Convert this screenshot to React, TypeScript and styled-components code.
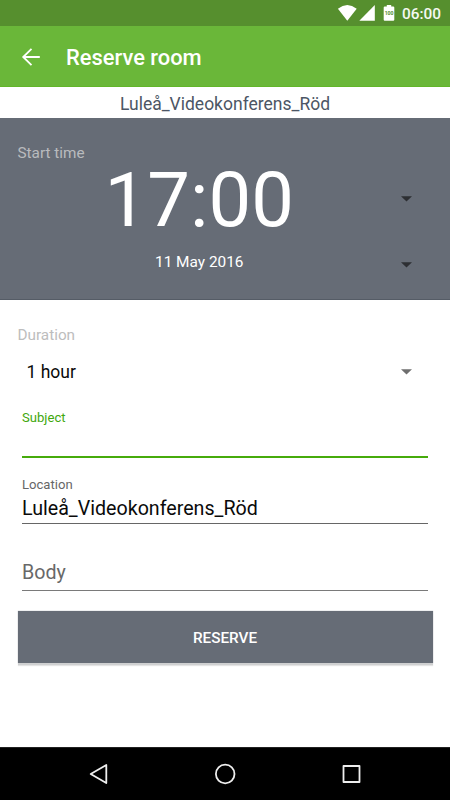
import React from "react";
import styled, { createGlobalStyle } from "styled-components";

const GlobalStyle = createGlobalStyle`
  * { box-sizing: border-box; }
  body { margin: 0; background: #fff; font-family: Roboto, sans-serif; }
`;

const Screen = styled.main`
  width: 450px;
  height: 800px;
  display: flex;
  flex-direction: column;
  background: #fff;
  overflow: hidden;
`;

const StatusBar = styled.div`
  height: 26px;
  flex: none;
  display: flex;
  align-items: flex-start;
  justify-content: flex-end;
  padding-right: 9px;
  background: #568f2e;
`;

const StatusIcons = styled.svg`
  display: block;
  width: 60px;
  height: 26px;
  margin-right: 5px;
`;

const Clock = styled.span`
  font-size: 15.4px;
  font-weight: 500;
  line-height: 28px;
  color: #f5f9f2;
`;

const Toolbar = styled.header`
  height: 61px;
  flex: none;
  display: flex;
  align-items: center;
  padding: 1px 0 0 21px;
  background: #6ab739;
  border-bottom: 1px solid #62b62a;
`;

const BackButton = styled.button`
  display: block;
  width: 20px;
  height: 20px;
  margin-right: 25px;
  padding: 0;
  border: 0;
  background: none;
  svg { display: block; }
`;

const Title = styled.h1`
  margin: 2px 0 0;
  font-size: 21.9px;
  line-height: 26px;
  font-weight: 500;
  color: #fff;
`;

const RoomName = styled.div`
  height: 31px;
  flex: none;
  padding-top: 6px;
  text-align: center;
  font-size: 17.5px;
  line-height: 22px;
  color: #4c5665;
`;

const StartPanel = styled.section`
  height: 182px;
  flex: none;
  padding: 25px 36px 0 17.5px;
  background: #666c76;
  border-bottom: 1px solid #555c66;
`;

const SectionLabel = styled.div<{ $color: string }>`
  height: 20px;
  font-size: 15.3px;
  line-height: 20px;
  color: ${(p) => p.$color};
`;

const PickerRow = styled.div<{ $height: number }>`
  height: ${(p) => p.$height}px;
  display: flex;
  align-items: center;
  justify-content: space-between;
`;

const PickerValue = styled.div<{ $size: number; $shift: number }>`
  flex: 1;
  text-align: center;
  padding-right: 18px;
  font-size: ${(p) => p.$size}px;
  line-height: 1;
  color: #fff;
  margin-top: ${(p) => p.$shift}px;
`;

const Arrow = styled.svg`
  display: block;
  flex: none;
  width: 15px;
  height: 8px;
`;

const Form = styled.form`
  flex: 1;
  display: flex;
  flex-direction: column;
  padding: 25px 17.5px 0;
`;

const DurationRow = styled.div`
  height: 54px;
  display: flex;
  align-items: center;
  justify-content: space-between;
  padding: 0 18.5px 0 9px;
  font-size: 17.5px;
  color: #0a0a0a;
`;

const Field = styled.div<{ $height: number; $line: string; $thick: number; $top?: number }>`
  height: ${(p) => p.$height}px;
  flex: none;
  margin: 0 4.5px;
  padding-top: ${(p) => p.$top ?? 0}px;
  display: flex;
  flex-direction: column;
  border-bottom: ${(p) => p.$thick}px solid ${(p) => p.$line};
`;

const FieldLabel = styled.label<{ $color: string }>`
  height: 16px;
  font-size: 13.1px;
  line-height: 16px;
  color: ${(p) => p.$color};
`;

const FieldText = styled.div<{ $color: string; $bottom: number }>`
  margin: auto 0 ${(p) => p.$bottom}px;
  font-size: 19.65px;
  line-height: 22px;
  color: ${(p) => p.$color};
`;

const ReserveButton = styled.button`
  height: 52px;
  flex: none;
  margin: 20px 0 0;
  border: 0;
  padding: 1px 0 0;
  background: #666c76;
  box-shadow: 0 2px 0 #cfd0d1, 0 3px 1px #e4e4e4, 0 0 1px #9a9fa5;
  font-family: inherit;
  font-size: 15.3px;
  font-weight: 500;
  color: #fff;
`;

const NavBar = styled.nav`
  height: 53px;
  flex: none;
  display: flex;
  justify-content: space-between;
  padding: 14px 87px 0;
  background: #000;
  border-top: 1px solid #222;
`;

const NavIcon = styled.svg`
  display: block;
  width: 24px;
  height: 24px;
  fill: none;
  stroke: #eee;
  stroke-width: 1.8;
  stroke-linejoin: round;
`;

const DropArrow = ({ color }: { color: string }) => (
  <Arrow viewBox="0 0 15 8">
    <path d="M2 1.3h11L7.5 6.6z" fill={color} />
  </Arrow>
);

export default function App() {
  return (
    <Screen>
      <GlobalStyle />
      <StatusBar>
        <StatusIcons viewBox="0 0 60 26">
          <path d="M.9 8.7Q10.3 1.3 19.7 8.7L10.3 20.7z" fill="#fff" />
          <path d="M37.8 5v15.7H22.3z" fill="#fff" />
          <path d="M47.8 6.4h2V5h4.4v1.4h2q1.1 0 1.1 1.1v12.2q0 1.1-1.1 1.1h-8.4q-1.1 0-1.1-1.1V7.5q0-1.1 1.1-1.1z" fill="#fff" />
          <text x="52.1" y="15.2" textAnchor="middle" fontSize="5.2" fontWeight="700" fill="#568f2e">100</text>
        </StatusIcons>
        <Clock>06:00</Clock>
      </StatusBar>
      <Toolbar>
        <BackButton aria-label="Back">
          <svg width="20" height="20" viewBox="0 0 20 20" fill="none" stroke="#fff" strokeWidth="1.8">
            <path d="M18.8 10H2.2M10.5 1.8L2.2 10l8.3 8.2" />
          </svg>
        </BackButton>
        <Title>Reserve room</Title>
      </Toolbar>
      <RoomName>Luleå_Videokonferens_Röd</RoomName>
      <StartPanel>
        <SectionLabel $color="#b9bbbe">Start time</SectionLabel>
        <PickerRow $height={72}>
          <PickerValue $size={76} $shift={2}>17:00</PickerValue>
          <DropArrow color="#2d2f33" />
        </PickerRow>
        <PickerRow $height={60}>
          <PickerValue $size={15.4} $shift={-4}>11 May 2016</PickerValue>
          <DropArrow color="#2d2f33" />
        </PickerRow>
      </StartPanel>
      <Form>
        <SectionLabel $color="#bdbdbd">Duration</SectionLabel>
        <DurationRow>
          <span>1 hour</span>
          <DropArrow color="#6f6f6f" />
        </DurationRow>
        <Field $height={59} $line="#46ab0b" $thick={2} $top={11}>
          <FieldLabel $color="#3fa80d">Subject</FieldLabel>
        </Field>
        <Field $height={66} $line="#666" $thick={1} $top={19}>
          <FieldLabel $color="#666">Location</FieldLabel>
          <FieldText $color="#0a0a0a" $bottom={3}>Luleå_Videokonferens_Röd</FieldText>
        </Field>
        <Field $height={67} $line="#7a7a7a" $thick={1}>
          <FieldText $color="#686868" $bottom={6}>Body</FieldText>
        </Field>
        <ReserveButton type="button">RESERVE</ReserveButton>
      </Form>
      <NavBar>
        <NavIcon viewBox="0 0 24 24"><path d="M19.3 3v18L3.7 12z" /></NavIcon>
        <NavIcon viewBox="0 0 24 24"><circle cx="12.2" cy="12" r="9.3" /></NavIcon>
        <NavIcon viewBox="0 0 24 24"><path d="M4.5 4h16v16h-16z" /></NavIcon>
      </NavBar>
    </Screen>
  );
}
